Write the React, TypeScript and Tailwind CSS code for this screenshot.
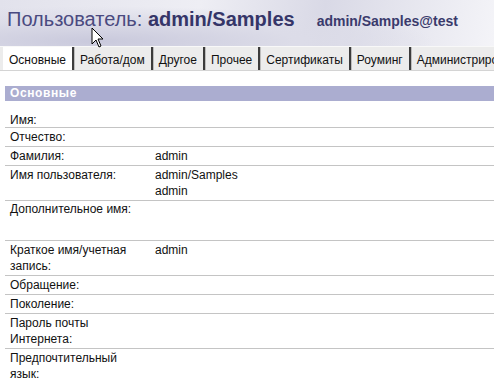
import React from "react";

const tabs = ["Основные", "Работа/дом", "Другое", "Прочее", "Сертификаты", "Роуминг", "Администрирование"];

type Row = { label: string[]; value?: string[]; h?: string };

const rows: Row[] = [
  { label: ["Имя:"], h: "h-[27px] pt-[11px]" },
  { label: ["Отчество:"] },
  { label: ["Фамилия:"], value: ["admin"] },
  { label: ["Имя пользователя:"], value: ["admin/Samples", "admin"] },
  { label: ["Дополнительное имя:"], h: "h-[40px]" },
  { label: ["Краткое имя/учетная", "запись:"], value: ["admin"] },
  { label: ["Обращение:"] },
  { label: ["Поколение:"] },
  { label: ["Пароль почты", "Интернета:"] },
  { label: ["Предпочтительный", "язык:"] },
];

const Cursor = () => (
  <svg className="absolute left-[91px] top-[27px]" width="14" height="22" viewBox="0 0 14 22">
    <path d="M1 1 L1 17 L5 13 L8 20 L10 19 L7 12 L12 12 Z" fill="#fff" stroke="#000" strokeWidth="1" strokeLinejoin="miter" />
  </svg>
);

export default function App() {
  return (
    <div className="relative w-[494px] h-[383px] overflow-hidden bg-white font-['Liberation_Sans',sans-serif] text-[12px] text-[#111]">
      {/* HEADER */}
      <div className="h-[46px] flex items-baseline pl-[7px] pt-[9px] whitespace-nowrap bg-[radial-gradient(ellipse_at_20%_90%,#c9c9dc_0%,#dcdce8_35%,transparent_60%),linear-gradient(100deg,#e2e2ec_0%,#eeeef4_40%,#d9d9e6_65%,#f4f4f8_100%)]">
        <span className="text-[20px] leading-none text-[#4a4a80]">
          Пользователь: <b className="text-[#353568]">admin/Samples</b>
        </span>
        <span className="ml-[22px] text-[14px] leading-none font-bold text-[#3a3a6c]">
          admin/Samples@test
        </span>
      </div>

      {/* TABS */}
      <div className="h-[25px] flex items-stretch bg-[#ececec] border-t border-[#f8f8f8] border-b border-b-[#d4d4d4] pl-[3px] whitespace-nowrap">
        {tabs.map((t, i) => (
          <div
            key={t}
            className={`flex items-center pt-[2px] pl-[6px] pr-[6px] border-r-2 border-r-[#3c3c3c] shadow-[1px_0_0_#bdbdbd] ${
              i === 0 ? "bg-white" : ""
            }`}
          >
            {t}
          </div>
        ))}
      </div>

      {/* SECTION */}
      <div className="pl-[5px] pt-[15px]">
        <div className="h-[15px] bg-[#abadd0] text-white font-bold text-[12px] leading-[15px] pl-[5px] tracking-[0.6px]">
          Основные
        </div>
        {rows.map((r, i) => (
          <div key={i} className={`flex border-b border-[#c4c4c4] leading-[16px] ${r.h ?? "pt-[1px] pb-[1px]"}`}>
            <div className="w-[150px] pl-[5px]">
              {r.label.map((l) => (
                <div key={l}>{l}</div>
              ))}
            </div>
            <div>
              {(r.value ?? []).map((v) => (
                <div key={v}>{v}</div>
              ))}
            </div>
          </div>
        ))}
      </div>

      <Cursor />
    </div>
  );
}
